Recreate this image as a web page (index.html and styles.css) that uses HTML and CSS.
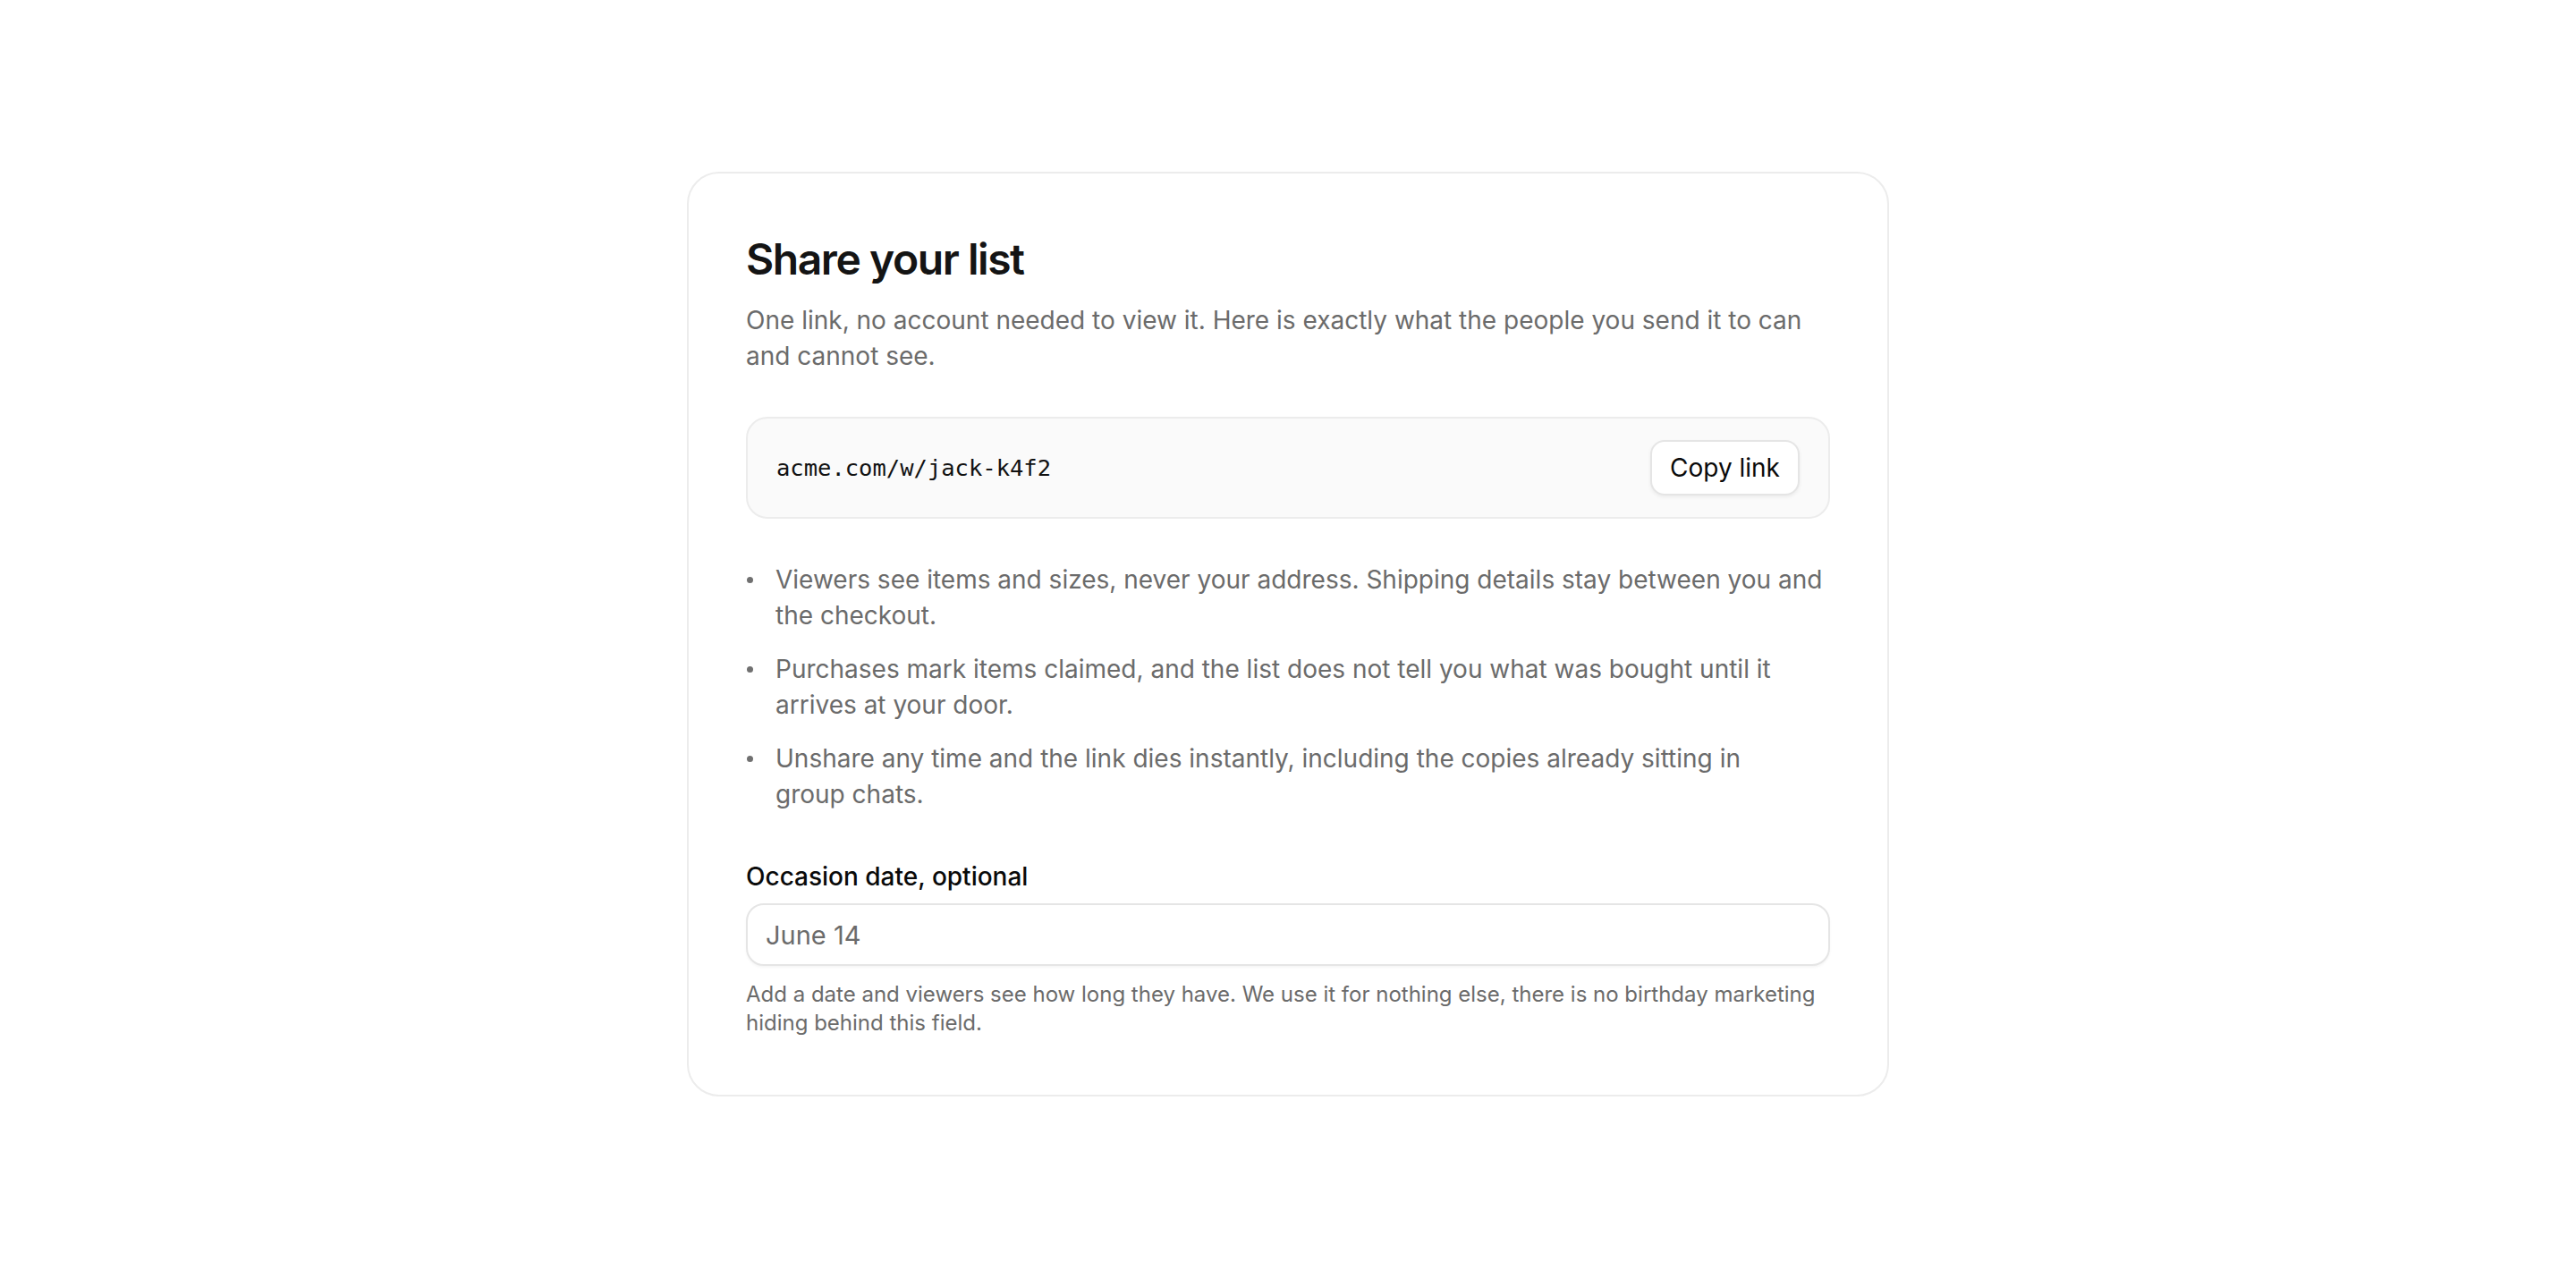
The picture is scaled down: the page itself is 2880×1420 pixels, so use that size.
FILE: index.html
```html
<!DOCTYPE html>
<html lang="en">
<head>
<meta charset="utf-8">
<title>Share your list</title>
<link rel="stylesheet" href="styles.css">
</head>
<body>
<main class="page">
  <section class="card">
    <h1 class="title">Share your list</h1>
    <p class="lead">One link, no account needed to view it. Here is exactly what the people you send it to can and cannot see.</p>
    <div class="linkbox">
      <span class="url">acme.com/w/jack-k4f2</span>
      <button class="copy" type="button">Copy link</button>
    </div>
    <ul class="facts">
      <li>Viewers see items and sizes, never your address. Shipping details stay between you and the checkout.</li>
      <li>Purchases mark items claimed, and the list does not tell you what was bought until it arrives at your door.</li>
      <li>Unshare any time and the link dies instantly, including the copies already sitting in group chats.</li>
    </ul>
    <div class="field">
      <label class="label" for="occasion">Occasion date, optional</label>
      <input class="input" id="occasion" type="text" value="June 14">
      <p class="help">Add a date and viewers see how long they have. We use it for nothing else, there is no birthday marketing hiding behind this field.</p>
    </div>
  </section>
</main>
</body>
</html>
```
FILE: styles.css
```css
* { box-sizing: border-box; }
html, body { margin: 0; padding: 0; background: #ffffff; }
body { font-family: Inter, "Noto Sans", sans-serif; color: #171717; }

.page {
  display: flex;
  justify-content: center;
  padding-top: 192px;
}

.card {
  width: 1344px;
  border: 2px solid #ececec;
  border-radius: 36px;
  padding: 64px;
  background: #ffffff;
}

.title {
  margin: 0;
  font-size: 48px;
  line-height: 64px;
  font-weight: 600;
  letter-spacing: -0.03em;
  color: #141414;
}

.lead {
  margin: 16px 0 0;
  font-size: 28px;
  line-height: 40px;
  color: #6b6b6b;
  text-wrap: pretty;
}

.linkbox {
  margin-top: 48px;
  display: flex;
  align-items: center;
  justify-content: space-between;
  background: #fafafa;
  border: 2px solid #ececec;
  border-radius: 24px;
  padding: 24px 32px;
}

.url {
  font-family: "DejaVu Sans Mono", "Liberation Mono", monospace;
  font-size: 25.5px;
  color: #111111;
}

.copy {
  height: 62px;
  padding: 0 20px;
  border: 2px solid #e5e5e5;
  border-radius: 16px;
  background: #ffffff;
  font-family: Inter, "Noto Sans", sans-serif;
  font-size: 28px;
  color: #0a0a0a;
  box-shadow: 0 2px 4px rgba(0, 0, 0, 0.06);
}

.facts {
  margin: 48px 0 0;
  padding: 0;
  list-style: none;
  display: flex;
  flex-direction: column;
  gap: 20px;
}

.facts li {
  display: flex;
  font-size: 28px;
  line-height: 40px;
  color: #6b6b6b;
  text-wrap: pretty;
}

.facts li::before {
  content: "";
  flex: none;
  width: 7px;
  height: 7px;
  border-radius: 50%;
  background: #707070;
  margin: 17px 25px 0 1px;
}

.field { margin-top: 52px; }

.label {
  display: block;
  font-size: 28px;
  line-height: 40px;
  font-weight: 500;
  color: #0a0a0a;
  margin-bottom: 10px;
}

.input {
  display: block;
  width: 100%;
  height: 70px;
  border: 2px solid #e5e5e5;
  border-radius: 20px;
  padding: 0 20px;
  font-family: Inter, "Noto Sans", sans-serif;
  font-size: 29px;
  color: #6b6b6b;
  background: #ffffff;
  box-shadow: 0 2px 3px rgba(0, 0, 0, 0.04);
  outline: none;
}

.help {
  margin: 16px 0 0;
  font-size: 24px;
  line-height: 32px;
  color: #6b6b6b;
  text-wrap: pretty;
}
```
